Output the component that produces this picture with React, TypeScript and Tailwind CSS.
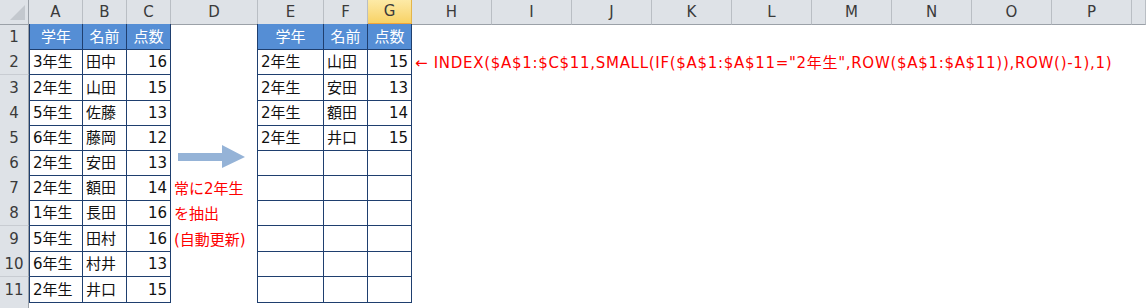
import { FC } from 'react';

const GRID =
  'grid grid-cols-[29px_54px_44px_44px_87px_66px_44px_44px_80px_80px_80px_80px_80px_80px_80px_80px_80px_1fr]';
const FONT = 'font-["DejaVu_Sans","Noto_Sans_CJK_JP",sans-serif]';

const letters = ['A', 'B', 'C', 'D', 'E', 'F', 'G', 'H', 'I', 'J', 'K', 'L', 'M', 'N', 'O', 'P', ''];
const heights = ['h-[25px]', 'h-[26px]', 'h-[25px]', 'h-[25px]', 'h-[25px]', 'h-[25px]', 'h-[25px]', 'h-[26px]', 'h-[25px]', 'h-[26px]', 'h-[25px]'];

const left: [string, string, number][] = [
  ['3年生', '田中', 16],
  ['2年生', '山田', 15],
  ['5年生', '佐藤', 13],
  ['6年生', '藤岡', 12],
  ['2年生', '安田', 13],
  ['2年生', '額田', 14],
  ['1年生', '長田', 16],
  ['5年生', '田村', 16],
  ['6年生', '村井', 13],
  ['2年生', '井口', 15],
];

const right: [string, string, number][] = [
  ['2年生', '山田', 15],
  ['2年生', '安田', 13],
  ['2年生', '額田', 14],
  ['2年生', '井口', 15],
];

// note in column D, rows 7-9
const noteLines: Record<number, string> = {
  7: '常に2年生',
  8: 'を抽出',
  9: '(自動更新)',
};

const cell = 'border-r border-b border-[#1f3f6f] flex items-center pt-[2px] whitespace-nowrap';
const head = 'border-r border-b border-[#1f3f6f] bg-[#558ed5] text-white flex items-center justify-center pt-[2px]';

const ColumnHeaders: FC = () => (
  <div className={`${GRID} h-[24px]`}>
    <div className="relative border-r border-b border-[#9ba1a8] bg-[#dee2e7]">
      <svg className="absolute left-[10px] top-[5px]" width="15" height="15" viewBox="0 0 15 15">
        <polygon points="15,0 15,15 0,15" fill="#c3c8ce" />
      </svg>
    </div>
    {letters.map((l, i) =>
      l === 'G' ? (
        <div
          key={i}
          className="flex items-center justify-center border-r border-b-2 border-r-[#e3b54a] border-b-[#f1a43a] bg-gradient-to-b from-[#fdeaa6] to-[#f8d264] text-[#3a3a3a]"
        >
          {l}
        </div>
      ) : (
        <div
          key={i}
          className="flex items-center justify-center border-r border-b border-r-[#b9bec4] border-b-[#9ba1a8] bg-[#dee2e7] text-[#3a3a3a]"
        >
          {l}
        </div>
      ),
    )}
  </div>
);

export default function App() {
  return (
    <div className={`relative w-[1146px] h-[308px] overflow-hidden bg-white text-[15px] text-[#111] ${FONT}`}>
      <ColumnHeaders />

      {heights.map((h, i) => {
        const r = i + 1;
        const L = r >= 2 ? left[r - 2] : null;
        const R = r >= 2 ? right[r - 2] : null;
        return (
          <div key={r} className={`${GRID} ${h}`}>
            <div className="flex items-center justify-center border-r border-b border-r-[#9ba1a8] border-b-[#c8ccd2] bg-[#dee2e7] text-[#3a3a3a] pt-[2px]">
              {r}
            </div>

            {r === 1 ? (
              <>
                <div className={`${head} border-l`}>学年</div>
                <div className={head}>名前</div>
                <div className={head}>点数</div>
              </>
            ) : (
              <>
                <div className={`${cell} border-l pl-[3px]`}>{L?.[0]}</div>
                <div className={`${cell} pl-[3px]`}>{L?.[1]}</div>
                <div className={`${cell} justify-end pr-[3px]`}>{L?.[2]}</div>
              </>
            )}

            <div className="border-r border-[#1f3f6f] flex items-center pl-[3px] pt-[2px] whitespace-nowrap text-[#ff0000] overflow-visible">
              {noteLines[r]}
            </div>

            {r === 1 ? (
              <>
                <div className={head}>学年</div>
                <div className={head}>名前</div>
                <div className={head}>点数</div>
              </>
            ) : (
              <>
                <div className={`${cell} pl-[3px]`}>{R?.[0]}</div>
                <div className={`${cell} pl-[3px]`}>{R?.[1]}</div>
                <div className={`${cell} justify-end pr-[3px]`}>{R?.[2]}</div>
              </>
            )}

            <div className="col-span-10 flex items-center pl-[3px] pt-[2px] whitespace-nowrap text-[#ff0000] tracking-[0.7px]">
              {r === 2 ? '← INDEX($A$1:$C$11,SMALL(IF($A$1:$A$11="2年生",ROW($A$1:$A$11)),ROW()-1),1)' : ''}
            </div>
          </div>
        );
      })}

      <div className={`${GRID} h-[25px]`}>
        <div className="border-r border-r-[#9ba1a8] bg-[#dee2e7]" />
      </div>

      <svg className="absolute left-[178px] top-[145px]" width="68" height="24" viewBox="0 0 68 24">
        <polygon points="0,8 44,8 44,0 67,12 44,23 44,16 0,16" fill="#95b3d7" />
      </svg>
    </div>
  );
}
